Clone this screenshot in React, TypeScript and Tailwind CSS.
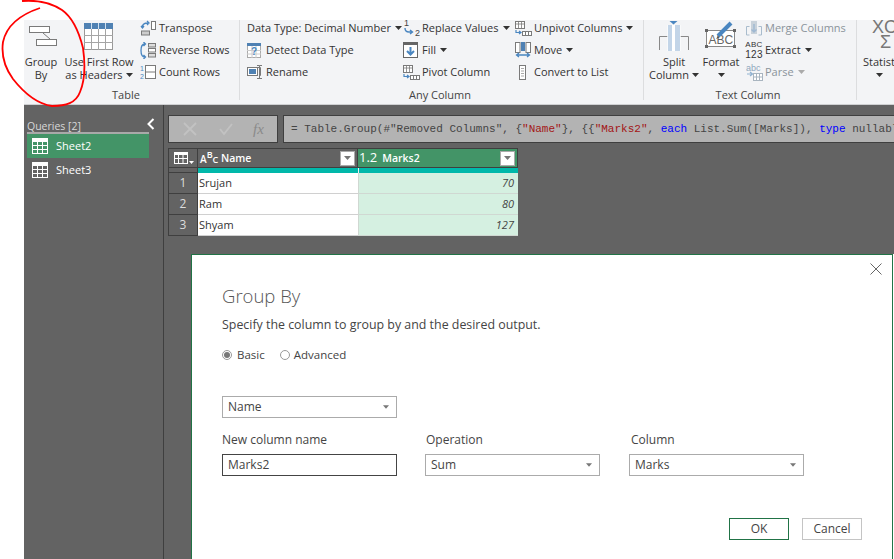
import React from "react";

const G = "#7a7a7a";
const B = "#4a86c0";

function Svg({ w, h, children, className }: { w: number; h: number; children: React.ReactNode; className?: string }) {
  return (
    <svg width={w} height={h} viewBox={`0 0 ${w} ${h}`} fill="none" className={"shrink-0 " + (className ?? "")}>
      {children}
    </svg>
  );
}

function Caret({ color = "#333" }: { color?: string }) {
  return (
    <svg width="7" height="4" viewBox="0 0 7 4" className="shrink-0">
      <path d="M0 0h7L3.5 4z" fill={color} />
    </svg>
  );
}

const GroupByIcon = () => (
  <Svg w={30} h={22}>
    <rect x="1.5" y="1.5" width="20" height="6" fill="#fff" stroke={G} />
    <rect x="8.5" y="14.5" width="20" height="6" fill="#fff" stroke={G} />
    <path d="M15 8l7 6" stroke={G} />
  </Svg>
);

const FirstRowIcon = () => (
  <Svg w={30} h={28}>
    <rect x="0.5" y="0.5" width="28" height="26" fill="#fff" stroke="#999" />
    <rect x="0" y="0" width="29" height="6" fill="#4f81b3" />
    <path d="M7.5 0v27M14.5 0v27M21.5 0v27M0 12.5h29M0 19.5h29" stroke="#a5a5a5" />
    <path d="M7.5 0v6M14.5 0v6M21.5 0v6" stroke="#cfe0f0" />
  </Svg>
);

const TransposeIcon = () => (
  <Svg w={16} h={16}>
    <rect x="11.5" y="1.5" width="4" height="8" fill="#fff" stroke={G} />
    <rect x="1.5" y="11" width="8" height="4" fill="#ccc" stroke={G} />
    <path d="M2 8c0-4 2-5 6-5M7 1l2 2-2 2M1 6l1.5 2L4 6" stroke={B} strokeWidth="1.3" />
  </Svg>
);

const ReverseIcon = () => (
  <Svg w={16} h={17}>
    <path d="M5 2C2 2 1 4 1 8.5S2 15 5 15M3.5 0l2 2-2 2M3.5 13l2 2-2 2" stroke={B} strokeWidth="1.3" />
    <rect x="8.5" y="1.5" width="7" height="3.5" fill="#ddd" stroke={G} />
    <rect x="8.5" y="6.5" width="7" height="3.5" fill="#fff" stroke={G} />
    <rect x="8.5" y="11.5" width="7" height="3.5" fill="#ddd" stroke={G} />
  </Svg>
);

const CountIcon = () => (
  <Svg w={16} h={16}>
    <text x="0" y="7" fontSize="7" fill={B} fontFamily="Liberation Sans">1</text>
    <text x="0" y="15" fontSize="7" fill={B} fontFamily="Liberation Sans">2</text>
    <rect x="5.5" y="1.5" width="10" height="13" fill="#fff" stroke={G} />
    <path d="M5.5 8h10" stroke={G} />
  </Svg>
);

const DetectIcon = () => (
  <Svg w={14} h={15}>
    <rect x="0.5" y="0.5" width="13" height="14" fill="#fff" stroke="#aaa" />
    <rect x="0" y="0" width="14" height="3" fill="#4f81b3" />
    <path d="M5 3v12M9 3v12M0 7.5h14M0 11h14" stroke="#ccc" />
    <text x="4" y="12" fontSize="10" fontWeight="bold" fill={B} fontFamily="Liberation Sans">?</text>
  </Svg>
);

const RenameIcon = () => (
  <Svg w={15} h={14}>
    <rect x="0.5" y="2.5" width="10" height="8" fill="#fff" stroke={G} />
    <rect x="2" y="4" width="7" height="5" fill="#4f81b3" />
    <path d="M11 2.5h2.5v8H12M10 0.5h2.5m0 0v13M10 13.5h5M12.5 0.5h2.5" stroke={G} />
  </Svg>
);

const ReplaceIcon = () => (
  <Svg w={18} h={18}>
    <text x="1" y="7" fontSize="9" fill="#444" fontFamily="Liberation Sans">1</text>
    <text x="12" y="17" fontSize="9" fill="#444" fontFamily="Liberation Sans">2</text>
    <path d="M2 9c0 3 1 4 4 4h3M7 11l2.5 2L7 15" stroke={B} strokeWidth="1.4" />
  </Svg>
);

const FillIcon = () => (
  <Svg w={15} h={16}>
    <rect x="0.5" y="0.5" width="14" height="15" fill="#fff" stroke="#666" />
    <rect x="0" y="0" width="15" height="3" fill="#666" />
    <path d="M7.5 5v7M4 9l3.5 3.5L11 9" stroke={B} strokeWidth="2" />
  </Svg>
);

const PivotIcon = () => (
  <Svg w={17} h={15}>
    <rect x="0.5" y="0.5" width="9" height="7" fill="#fff" stroke={G} />
    <path d="M0 3h10M3.5 0v8M6.5 0v8" stroke={G} strokeWidth="0.8" />
    <rect x="7.5" y="10.5" width="9" height="4" fill="#fff" stroke={G} />
    <path d="M10.5 10v5M13.5 10v5" stroke={G} />
    <path d="M1 9v2.5h4M4 10l2 1.5L4 13" stroke={B} strokeWidth="1.2" />
  </Svg>
);

const MoveIcon = () => (
  <Svg w={16} h={16}>
    <rect x="0.5" y="0.5" width="4.5" height="10" fill="#fff" stroke={G} />
    <rect x="11" y="0.5" width="4.5" height="10" fill="#fff" stroke={G} />
    <rect x="6" y="0" width="4" height="9" fill="#4f81b3" />
    <path d="M1.5 13h13M4 11l-2.5 2L4 15M12 11l2.5 2L12 15" stroke={B} strokeWidth="1.3" />
  </Svg>
);

const ConvertIcon = () => (
  <Svg w={8} h={15}>
    <rect x="0.5" y="0.5" width="6" height="14" fill="#fff" stroke={G} />
    <path d="M2 3.5h3M2 6h3M2 8.5h3M2 11h3" stroke="#aaa" />
  </Svg>
);

const SplitIcon = () => (
  <Svg w={30} h={30}>
    <path d="M0.5 29V15.5h8M29.5 29V15.5h-8" stroke="#888" />
    <rect x="8.5" y="4" width="13" height="26" fill="#fff" />
    <rect x="9" y="4" width="4" height="26" fill="#c3d5e8" />
    <rect x="16" y="4" width="5" height="26" fill="#c3d5e8" />
    <path d="M10.5 0h8L14.5 3.5z" fill={B} />
  </Svg>
);

const FormatIcon = () => (
  <Svg w={32} h={28}>
    <rect x="1.5" y="9.5" width="28" height="16" fill="#fff" stroke="#888" />
    <rect x="0" y="8" width="3" height="3" fill="#666" />
    <rect x="28" y="8" width="3" height="3" fill="#666" />
    <rect x="0" y="24" width="3" height="3" fill="#666" />
    <rect x="28" y="24" width="3" height="3" fill="#666" />
    <text x="3.5" y="23" fontSize="12" fill="#666" fontFamily="Liberation Sans">ABC</text>
    <path d="M13 15L26 2" stroke={B} strokeWidth="4" />
    <path d="M11 18l2-3 1.5 1.5z" fill="#555" />
  </Svg>
);

const MergeIcon = () => (
  <Svg w={16} h={15}>
    <path d="M0.5 14V5.5h3M15.5 14V5.5h-3M0.5 14h3M15.5 14h-3" stroke="#a9bccd" />
    <rect x="5" y="0" width="6" height="13" fill="#c9d2da" />
    <path d="M8 3v8M5.5 8.5L8 11l2.5-2.5" stroke="#9fb8d2" strokeWidth="1.4" />
  </Svg>
);

const ExtractIcon = () => (
  <div className="flex h-[22px] w-4 flex-col items-center justify-center font-['Liberation_Sans'] leading-[10px] text-[#333]">
    <span className="text-[8px] tracking-[0.3px]">ABC</span>
    <span className="text-[10px] tracking-[0.3px]">123</span>
  </div>
);

const ParseIcon = () => (
  <Svg w={17} h={17}>
    <text x="0" y="7" fontSize="9" fill="#8fa7bd" fontFamily="Liberation Sans">abc</text>
    <path d="M1 10h5M4 8l2.5 2L4 12" stroke="#8fb1d0" strokeWidth="1.2" />
    <rect x="7.5" y="9.5" width="9" height="7" fill="#fff" stroke="#a9b5c0" />
    <path d="M10.5 9v8M13.5 9v8M7 13h10" stroke="#a9b5c0" />
  </Svg>
);

function Small({ icon, label, caret, disabled, w }: { icon?: React.ReactNode; label: string; caret?: boolean; disabled?: boolean; w?: string }) {
  return (
    <div className={"flex h-4 items-center whitespace-nowrap " + (disabled ? "text-[#8a939b]" : "text-[#333]")}>
      {icon && <div className={"flex items-center " + (w ?? "w-[19px]")}>{icon}</div>}
      <span>{label}</span>
      {caret && <span className="ml-[4px]"><Caret color={disabled ? "#aaa" : "#333"} /></span>}
    </div>
  );
}

function Group({ width, label, labelCenter, children }: { width: string; label: string; labelCenter?: string; children: React.ReactNode }) {
  return (
    <div className={"flex h-20 shrink-0 flex-col border-r border-[#dcdddf] " + width}>
      <div className="flex h-[68px] shrink-0">{children}</div>
      <div className={"shrink-0 text-center leading-[14px] text-[#444] " + (labelCenter ?? "")}>{label}</div>
    </div>
  );
}

function Large({ icon, lines, width, iconClass }: { icon: React.ReactNode; lines: React.ReactNode[]; width: string; iconClass?: string }) {
  return (
    <div className={"flex shrink-0 flex-col items-center text-[#333] " + width}>
      <div className={"flex h-[35px] items-start justify-center " + (iconClass ?? "")}>{icon}</div>
      <div className="flex flex-col items-center whitespace-nowrap leading-[13px]">
        {lines.map((l, i) => (
          <div key={i} className="flex h-[13px] items-center gap-[3px]">{l}</div>
        ))}
      </div>
    </div>
  );
}

const SheetIcon = () => (
  <Svg w={16} h={16}>
    <rect x="0.5" y="0.5" width="15" height="15" fill="none" stroke="#fff" />
    <rect x="0" y="0" width="16" height="4" fill="#fff" />
    <path d="M5.5 4v12M10.5 4v12M0 7.5h16M0 11.5h16" stroke="#fff" />
  </Svg>
);

const FilterBtn = () => (
  <div className="flex h-[15px] w-[15px] items-center justify-center border border-[#aaa] bg-white">
    <Caret color="#777" />
  </div>
);

function Select({ label, className }: { label: string; className: string }) {
  return (
    <div className={"flex h-[22px] items-center justify-between border border-[#ababab] bg-white pl-[5px] pr-[7px] text-[#444] " + className}>
      <span>{label}</span>
      <svg width="6" height="4" viewBox="0 0 7 4" className="shrink-0"><path d="M0 0h7L3.5 4z" fill="#777" /></svg>
    </div>
  );
}

const rows = [
  ["1", "Srujan", "70"],
  ["2", "Ram", "80"],
  ["3", "Shyam", "127"],
];

export default function App() {
  return (
    <div className="relative flex h-[559px] w-[894px] flex-col overflow-hidden bg-white pl-6 pt-5 font-['Open_Sans',sans-serif] text-[11px]">
      {/* Ribbon */}
      <div className="flex h-[85px] shrink-0 overflow-hidden border-b border-[#cfd0d2] bg-[#f3f4f6]">
        <Group width="w-[216px]" label="Table" labelCenter="pr-[11px]">
          <Large width="w-[34px]" iconClass="pt-[5px] pl-[3px]" icon={<GroupByIcon />} lines={["Group", "By"]} />
          <Large
            width="w-[82px]"
            iconClass="pt-[3px]"
            icon={<FirstRowIcon />}
            lines={["Use First Row", <React.Fragment key="a">as Headers <Caret /></React.Fragment>]}
          />
          <div className="flex flex-col gap-1.5">
            <Small icon={<TransposeIcon />} label="Transpose" />
            <Small icon={<ReverseIcon />} label="Reverse Rows" />
            <Small icon={<CountIcon />} label="Count Rows" />
          </div>
        </Group>
        <Group width="w-[404px]" label="Any Column" labelCenter="pr-[3px]">
          <div className="flex w-[163px] shrink-0 flex-col gap-1.5 pl-[7px]">
            <Small label="Data Type: Decimal Number" caret />
            <Small icon={<DetectIcon />} label="Detect Data Type" />
            <Small icon={<RenameIcon />} label="Rename" />
          </div>
          <div className="flex w-[112px] shrink-0 flex-col gap-1.5">
            <Small icon={<ReplaceIcon />} label="Replace Values" caret />
            <Small icon={<FillIcon />} label="Fill" caret />
            <Small icon={<PivotIcon />} label="Pivot Column" />
          </div>
          <div className="flex flex-col gap-1.5">
            <Small icon={<PivotIcon />} label="Unpivot Columns" caret />
            <Small icon={<MoveIcon />} label="Move" caret />
            <Small icon={<div className="pl-[4px]"><ConvertIcon /></div>} label="Convert to List" />
          </div>
        </Group>
        <Group width="w-[213px]" label="Text Column" labelCenter="pr-[4px]">
          <Large
            width="w-[60px]"
            iconClass="pt-[1px]"
            icon={<SplitIcon />}
            lines={["Split", <React.Fragment key="a">Column <Caret /></React.Fragment>]}
          />
          <Large
            width="w-[36px] ml-[-1px]"
            iconClass="pt-[1px]"
            icon={<FormatIcon />}
            lines={["Format", <Caret key="a" />]}
          />
          <div className="ml-[7px] flex flex-col gap-1.5">
            <Small icon={<MergeIcon />} label="Merge Columns" disabled />
            <Small icon={<ExtractIcon />} label="Extract" caret />
            <Small icon={<ParseIcon />} label="Parse" caret disabled />
          </div>
        </Group>
        <div className="flex w-[40px] shrink-0 flex-col items-start pl-[6px] text-[#333]">
          <div className="ml-[9px] flex h-[35px] flex-col whitespace-nowrap font-['Liberation_Sans'] leading-[15px] text-[#777]">
            <span className="text-[18px]"><span className="overline">X</span>C</span>
            <span className="pl-[8px] text-[18px]">Σ</span>
          </div>
          <div className="whitespace-nowrap leading-[13px]">Statistics</div>
          <div className="flex h-[13px] w-[33px] items-center justify-center"><Caret /></div>
        </div>
      </div>

      {/* Body */}
      <div className="flex min-h-0 flex-1 bg-[#636363]">
        <aside className="flex w-[140px] shrink-0 flex-col border-r border-[#3f3f3f] pl-[3px] pt-[14px]">
          <div className="flex h-[15px] w-[122px] items-center justify-between border-b-2 border-b-[#a9a9a9] text-[10.5px] leading-3 text-[#d8d8d8]">
            <span>Queries [2]</span>
          </div>
          <div className="flex h-6 w-[122px] items-center gap-[8px] bg-[#439467] pl-[5px] text-white">
            <SheetIcon />
            <span>Sheet2</span>
          </div>
          <div className="flex h-6 w-[122px] items-center gap-[8px] pl-[5px] text-white">
            <SheetIcon />
            <span>Sheet3</span>
          </div>
        </aside>
        <main className="min-w-0 flex-1 pl-1 pt-[10px]">
          <div className="flex h-7 gap-[5px]">
            <div className="flex w-[110px] shrink-0 items-center border border-[#3f3f3f] bg-[#b3b3b3] pl-[14px] text-[#a0a0a0]">
              <svg width="14" height="14" viewBox="0 0 14 14" className="mr-[22px] shrink-0">
                <path d="M1 1l12 12M13 1L1 13" stroke="#c2c2c2" strokeWidth="1.8" />
              </svg>
              <svg width="14" height="14" viewBox="0 0 14 14" className="mr-[20px] shrink-0">
                <path d="M1 7l4 5 8-10" stroke="#c2c2c2" strokeWidth="1.8" fill="none" />
              </svg>
              <span className="font-['Liberation_Serif'] text-[15px] italic text-[#8a8a8a]">fx</span>
            </div>
            <div className="-mr-2 min-w-0 flex-1 overflow-hidden whitespace-nowrap border border-[#3f3f3f] bg-[#b3b3b3] pl-[7px] font-['Liberation_Mono'] text-[11px] leading-[26px] text-[#444]">
              = Table.Group(#"Removed Columns", {"{"}<span className="text-[#a31515]">"Name"</span>{"}"}, {"{{"}<span className="text-[#a31515]">"Marks2"</span>, <span className="text-[#0000ff]">each</span> List.Sum([Marks]), <span className="text-[#0000ff]">type</span> nullable number{"}}"})
            </div>
          </div>

          <div className="mt-[5px] grid w-[350px] grid-cols-[30px_160px_160px] grid-rows-[20px_5px_21px_21px_21px]">
            <div className="flex items-center gap-[1px] border border-[#3f3f3f] pl-[5px]">
              <Svg w={14} h={12}>
                <rect x="0.5" y="0.5" width="13" height="11" stroke="#fff" />
                <rect x="0" y="0" width="14" height="3" fill="#fff" />
                <path d="M4.5 3v9M9 3v9M0 6.5h14" stroke="#fff" />
              </Svg>
              <svg width="5" height="3" viewBox="0 0 7 4" className="mt-[8px]"><path d="M0 0h7L3.5 4z" fill="#fff" /></svg>
            </div>
            <div className="flex items-center justify-between border-y border-r border-[#3f3f3f] pr-[2px] font-semibold text-white">
              <div className="flex items-center">
                <span className="relative flex w-[18px] pl-[2px] text-[10px] font-semibold leading-3">
                  <span className="mt-[3px]">A</span>
                  <span className="-mt-[1px] text-[9px]">B</span>
                  <span className="mt-[4px] text-[9px]">C</span>
                </span>
                <span className="ml-[5px] mt-[1px] text-[10.5px]">Name</span>
              </div>
              <FilterBtn />
            </div>
            <div className="flex items-center justify-between border-y border-r border-[#3f3f3f] bg-[#439467] pr-[2px] font-semibold text-white">
              <div className="flex items-center">
                <span className="pl-px text-[13px] font-normal">1.2</span>
                <span className="ml-[5px] mt-[1px] text-[10.5px]">Marks2</span>
              </div>
              <FilterBtn />
            </div>

            <div className="border-b border-x border-[#3f3f3f]" />
            <div className="bg-[#01b8aa]" />
            <div className="border-l border-[#f0f0f0] bg-[#01b8aa]" />

            {rows.map((r) => (
              <React.Fragment key={r[0]}>
                <div className="flex items-center justify-center border-b border-x border-[#3f3f3f] text-[12px] text-[#ddd]">{r[0]}</div>
                <div className="flex items-center border-b border-[#d0d0d0] bg-white pl-[1px] text-[#333]">{r[1]}</div>
                <div className="flex items-center justify-end border-b border-l border-[#d0d8d2] bg-[#d5f0e1] pr-[4px] italic text-[#444]">{r[2]}</div>
              </React.Fragment>
            ))}
          </div>
        </main>
      </div>

      {/* Dialog */}
      <div className="absolute bottom-0 left-[191px] top-[254px] w-[703px] bg-white pr-px">
        <div className="relative h-full border-x border-t border-[#217346] pl-[30px] pt-[27px] text-[12px] text-[#444]">
          <svg width="12" height="12" viewBox="0 0 12 12" className="absolute right-[10px] top-[8px]">
            <path d="M0.5 0.5l11 11M11.5 0.5l-11 11" stroke="#666" />
          </svg>
          <div className="text-[18.5px] font-light leading-[28px] text-[#555]">Group By</div>
          <div className="mt-[7px] text-[12.4px] leading-[16px]">Specify the column to group by and the desired output.</div>
          <div className="mt-[14px] flex h-4 items-center text-[11.5px]">
            <span className="flex h-[10px] w-[10px] items-center justify-center rounded-full border border-[#999]">
              <span className="h-[6px] w-[6px] rounded-full bg-[#777]" />
            </span>
            <span className="ml-[5px]">Basic</span>
            <span className="ml-[15px] h-[10px] w-[10px] rounded-full border border-[#999]" />
            <span className="ml-[4px]">Advanced</span>
          </div>
          <Select label="Name" className="mt-[33px] w-[175px]" />
          <div className="mt-[14px] flex">
            <div className="w-[203px]">
              <div className="mb-[6px] leading-[16px]">New column name</div>
              <div className="flex h-[22px] w-[175px] items-center border border-[#444] pl-[5px]">Marks2</div>
            </div>
            <div className="w-[204px]">
              <div className="mb-[6px] pl-px leading-[16px]">Operation</div>
              <Select label="Sum" className="w-[175px]" />
            </div>
            <div>
              <div className="mb-[6px] pl-[2px] leading-[16px]">Column</div>
              <Select label="Marks" className="w-[175px]" />
            </div>
          </div>
          <div className="mt-[42px] flex gap-[13px] pl-[507px]">
            <div className="flex h-[22px] w-[60px] items-center justify-center border border-[#217346]">OK</div>
            <div className="flex h-[22px] w-[60px] items-center justify-center border border-[#c4c4c4]">Cancel</div>
          </div>
        </div>
      </div>

      {/* Queries collapse chevron */}
      <svg width="8" height="12" viewBox="0 0 8 12" className="absolute left-[147px] top-[118px]">
        <path d="M6.5 1L1.5 6l5 5" stroke="#fff" strokeWidth="2" fill="none" />
      </svg>

      {/* Hand-drawn red annotation */}
      <svg width="100" height="112" viewBox="0 0 100 112" className="absolute left-0 top-0">
        <path
          d="M22 1C35 0 50 2 62 10C72 17 79 32 83 48C85 62 85 80 80 92C76 103 66 106 52 106C38 104 24 93 13 79C5 68 1 56 3 42C6 28 16 16 40 8"
          stroke="#f00"
          strokeWidth="1.8"
          fill="none"
        />
      </svg>
    </div>
  );
}
